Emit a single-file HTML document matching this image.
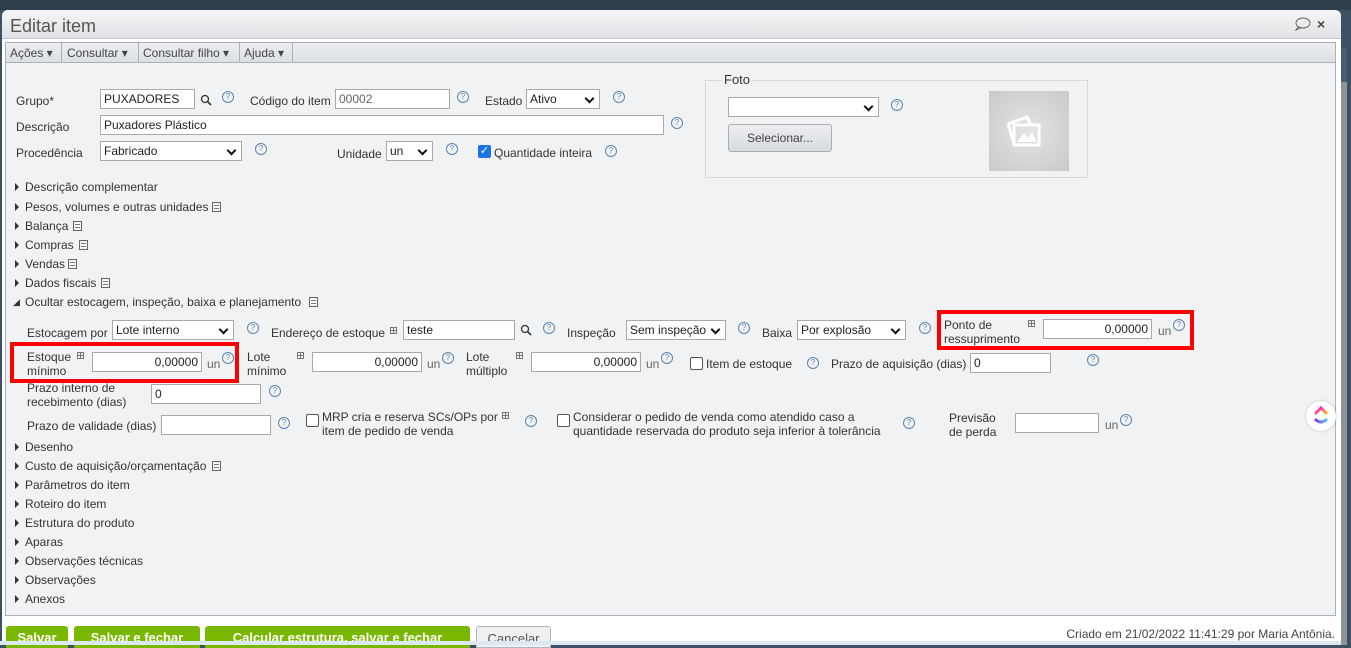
<!DOCTYPE html>
<html><head><meta charset="utf-8">
<style>
*{box-sizing:border-box;margin:0;padding:0}
body{width:1351px;height:645px;overflow:hidden;background:#3d5064;font-family:"Liberation Sans",sans-serif;font-size:12px;color:#333;position:relative}
.a{position:absolute;white-space:nowrap;line-height:14px}
.in{position:absolute;background:#fff;border:1px solid #a9a9a9;height:20px;font-size:12px;line-height:18px;padding:0 3px;color:#222;white-space:nowrap}
.r{text-align:right}
.sel:after{content:"";position:absolute;right:6px;top:5px;width:5px;height:5px;border-right:2px solid #111;border-bottom:2px solid #111;transform:rotate(45deg)}
.q{position:absolute;width:12px;height:12px;border:1px solid #5b85ad;border-radius:50%;font-size:8px;line-height:10px;text-align:center;color:#5b85ad}
.tri{position:absolute;width:0;height:0;border-left:4px solid #333;border-top:4px solid transparent;border-bottom:4px solid transparent}
.doc{position:absolute;width:9px;height:10px;border:1px solid #666;background:repeating-linear-gradient(#fff 0 2px,#777 2px 3px);background-clip:content-box;padding:1px}
.pl{position:absolute;width:7px;height:7px;border:1px solid #777;background:linear-gradient(90deg,transparent 2px,#777 2px 3px,transparent 3px),linear-gradient(transparent 2px,#777 2px 3px,transparent 3px)}
.cb{position:absolute;width:13px;height:13px;border:1px solid #555;border-radius:2px;background:#fff}
.gb{position:absolute;top:626px;height:22px;background:#7ab800;border-radius:3px 3px 0 0;color:#fff;font-weight:bold;font-size:13px;padding:5px 0 0;line-height:14px;text-align:center}
</style></head><body>
<div style="position:absolute;left:0;top:0;width:1351px;height:10px;background:#2f3e4c"></div>
<div style="position:absolute;left:2px;top:10px;width:1339px;height:635px;background:#fff;border-radius:6px 6px 0 0"></div>
<div style="position:absolute;left:2px;top:10px;width:1339px;height:29px;background:linear-gradient(#f4f5f6,#e1e3e6);border-radius:6px 6px 0 0;border-bottom:1px solid #c3c7cc"></div>
<div class="a" style="left:10px;top:16px;font-size:18px;line-height:20px;color:#555">Editar item</div>
<svg style="position:absolute;left:1294px;top:17px" width="18" height="14"><ellipse cx="9" cy="6" rx="7" ry="5" fill="none" stroke="#666"/><path d="M4 10 L2 13 L7 10.5" fill="none" stroke="#666"/></svg>
<div class="a" style="left:1317px;top:17px;font-size:14px;font-weight:bold;color:#444">×</div>
<div style="position:absolute;left:1341px;top:48px;width:6px;height:597px;background:#8e9398"></div>
<div style="position:absolute;left:1341px;top:48px;width:6px;height:34px;background:#4a5e72"></div>
<div style="position:absolute;left:1347px;top:10px;width:4px;height:635px;background:#3d5064"></div>
<div style="position:absolute;left:5px;top:42px;width:1331px;height:21px;background:linear-gradient(#eceef0,#dcdfe3);border:1px solid #aab0b6"></div>
<div class="a" style="left:10px;top:46px;color:#444">Ações ▾</div>
<div style="position:absolute;left:61px;top:43px;width:1px;height:19px;background:#aab0b6"></div>
<div class="a" style="left:67px;top:46px;color:#444">Consultar ▾</div>
<div style="position:absolute;left:138px;top:43px;width:1px;height:19px;background:#aab0b6"></div>
<div class="a" style="left:143px;top:46px;color:#444">Consultar filho ▾</div>
<div style="position:absolute;left:239px;top:43px;width:1px;height:19px;background:#aab0b6"></div>
<div class="a" style="left:244px;top:46px;color:#444">Ajuda ▾</div>
<div style="position:absolute;left:292px;top:43px;width:1px;height:19px;background:#aab0b6"></div>
<div style="position:absolute;left:5px;top:63px;width:1331px;height:553px;background:#f1f2f4;border:1px solid #aab0b6;border-top:none"></div>

<div class="a" style="left:16px;top:94px">Grupo*</div>
<div class="in" style="left:100px;top:89px;width:95px">PUXADORES</div>
<svg style="position:absolute;left:200px;top:94px" width="12" height="12"><circle cx="5" cy="5" r="3.5" fill="none" stroke="#333" stroke-width="1.3"/><path d="M7.5 7.5L11 11" stroke="#333" stroke-width="1.6"/></svg>
<div class="q" style="left:222px;top:91px">?</div>
<div class="a" style="left:250px;top:94px">Código do item</div>
<div class="in" style="left:335px;top:89px;width:115px;color:#666">00002</div>
<div class="q" style="left:457px;top:91px">?</div>
<div class="a" style="left:485px;top:94px">Estado</div>
<div class="in sel" style="left:526px;top:89px;width:74px">Ativo</div>
<div class="q" style="left:613px;top:91px">?</div>

<div class="a" style="left:16px;top:120px">Descrição</div>
<div class="in" style="left:100px;top:115px;width:564px">Puxadores Plástico</div>
<div class="q" style="left:671px;top:117px">?</div>

<div class="a" style="left:16px;top:146px">Procedência</div>
<div class="in sel" style="left:100px;top:141px;width:142px">Fabricado</div>
<div class="q" style="left:255px;top:143px">?</div>
<div class="a" style="left:337px;top:147px">Unidade</div>
<div class="in sel" style="left:386px;top:141px;width:47px">un</div>
<div class="q" style="left:446px;top:143px">?</div>
<div style="position:absolute;left:478px;top:145px;width:13px;height:13px;background:#1a73e8;border-radius:2px;color:#fff;font-size:11px;line-height:13px;text-align:center">✓</div>
<div class="a" style="left:494px;top:146px">Quantidade inteira</div>
<div class="q" style="left:605px;top:145px">?</div>

<div style="position:absolute;left:705px;top:80px;width:383px;height:98px;border:1px solid #d6d9dc"></div>
<div class="a" style="left:722px;top:73px;background:#f1f2f4;padding:0 2px;font-size:13px">Foto</div>
<div class="in sel" style="left:728px;top:97px;width:151px"></div>
<div class="q" style="left:891px;top:99px">?</div>
<div style="position:absolute;left:728px;top:124px;width:104px;height:28px;background:linear-gradient(#eceef0,#d8dbdf);border:1px solid #a9adb2;border-radius:3px;text-align:center;line-height:26px;color:#444">Selecionar...</div>
<div style="position:absolute;left:989px;top:91px;width:80px;height:80px;background:radial-gradient(#e4e4e4,#c9c9c9)"></div>
<svg style="position:absolute;left:1005px;top:111px" width="40" height="40"><path d="M3 13 L22 6 L26 14" fill="none" stroke="#fff" stroke-width="3"/><rect x="9" y="14" width="25" height="20" fill="none" stroke="#fff" stroke-width="3"/><path d="M12 31 L19 22 L23 27 L27 21 L32 31Z" fill="#fff"/><path d="M3 13 L9 32" stroke="#fff" stroke-width="3"/></svg>

<div class="tri" style="left:15px;top:183px"></div><div class="a" style="left:25px;top:180px">Descrição complementar</div>
<div class="tri" style="left:15px;top:203px"></div><div class="a" style="left:25px;top:200px">Pesos, volumes e outras unidades</div><div class="doc" style="left:212px;top:202px"></div>
<div class="tri" style="left:15px;top:222px"></div><div class="a" style="left:25px;top:219px">Balança</div><div class="doc" style="left:73px;top:221px"></div>
<div class="tri" style="left:15px;top:241px"></div><div class="a" style="left:25px;top:238px">Compras</div><div class="doc" style="left:79px;top:240px"></div>
<div class="tri" style="left:15px;top:260px"></div><div class="a" style="left:25px;top:257px">Vendas</div><div class="doc" style="left:68px;top:259px"></div>
<div class="tri" style="left:15px;top:279px"></div><div class="a" style="left:25px;top:276px">Dados fiscais</div><div class="doc" style="left:101px;top:278px"></div>
<div class="a" style="left:13px;top:295px;font-size:9px">◢</div><div class="a" style="left:25px;top:295px">Ocultar estocagem, inspeção, baixa e planejamento</div><div class="doc" style="left:309px;top:297px"></div>

<div class="a" style="left:27px;top:326px">Estocagem por</div>
<div class="in sel" style="left:112px;top:320px;width:122px">Lote interno</div>
<div class="q" style="left:247px;top:322px">?</div>
<div class="a" style="left:271px;top:326px">Endereço de estoque</div><div class="pl" style="left:390px;top:327px"></div>
<div class="in" style="left:403px;top:320px;width:112px">teste</div>
<svg style="position:absolute;left:520px;top:324px" width="12" height="12"><circle cx="5" cy="5" r="3.5" fill="none" stroke="#333" stroke-width="1.3"/><path d="M7.5 7.5L11 11" stroke="#333" stroke-width="1.6"/></svg>
<div class="q" style="left:543px;top:322px">?</div>
<div class="a" style="left:567px;top:326px">Inspeção</div>
<div class="in sel" style="left:626px;top:320px;width:100px">Sem inspeção</div>
<div class="q" style="left:738px;top:322px">?</div>
<div class="a" style="left:762px;top:326px">Baixa</div>
<div class="in sel" style="left:797px;top:320px;width:109px">Por explosão</div>
<div class="q" style="left:919px;top:322px">?</div>
<div style="position:absolute;left:937px;top:310px;width:257px;height:40px;border:4px solid #f00"></div>
<div class="a" style="left:944px;top:318px">Ponto de<br>ressuprimento</div><div class="pl" style="left:1028px;top:320px"></div>
<div class="in r" style="left:1043px;top:319px;width:109px">0,00000</div>
<div class="a" style="left:1158px;top:324px;color:#666">un</div><div class="q" style="left:1173px;top:319px">?</div>

<div style="position:absolute;left:10px;top:342px;width:229px;height:41px;border:4px solid #f00"></div>
<div class="a" style="left:27px;top:350px">Estoque<br>mínimo</div><div class="pl" style="left:77px;top:352px"></div>
<div class="in r" style="left:92px;top:352px;width:110px">0,00000</div>
<div class="a" style="left:207px;top:357px;color:#666">un</div><div class="q" style="left:222px;top:352px">?</div>
<div class="a" style="left:247px;top:350px">Lote<br>mínimo</div><div class="pl" style="left:297px;top:352px"></div>
<div class="in r" style="left:312px;top:352px;width:110px">0,00000</div>
<div class="a" style="left:427px;top:357px;color:#666">un</div><div class="q" style="left:442px;top:352px">?</div>
<div class="a" style="left:466px;top:350px">Lote<br>múltiplo</div><div class="pl" style="left:516px;top:352px"></div>
<div class="in r" style="left:531px;top:352px;width:110px">0,00000</div>
<div class="a" style="left:646px;top:357px;color:#666">un</div><div class="q" style="left:661px;top:352px">?</div>
<div class="cb" style="left:690px;top:357px"></div><div class="a" style="left:706px;top:357px">Item de estoque</div>
<div class="q" style="left:807px;top:357px">?</div>
<div class="a" style="left:831px;top:357px">Prazo de aquisição (dias)</div>
<div class="in" style="left:970px;top:353px;width:81px">0</div>
<div class="q" style="left:1087px;top:354px">?</div>

<div class="a" style="left:27px;top:381px">Prazo interno de<br>recebimento (dias)</div>
<div class="in" style="left:151px;top:384px;width:110px">0</div>
<div class="q" style="left:269px;top:385px">?</div>

<div class="a" style="left:27px;top:419px">Prazo de validade (dias)</div>
<div class="in" style="left:161px;top:415px;width:110px"></div>
<div class="q" style="left:278px;top:417px">?</div>
<div class="cb" style="left:306px;top:414px"></div>
<div class="a" style="left:322px;top:410px">MRP cria e reserva SCs/OPs por<br>item de pedido de venda</div><div class="pl" style="left:502px;top:412px"></div>
<div class="q" style="left:525px;top:415px">?</div>
<div class="cb" style="left:557px;top:414px"></div>
<div class="a" style="left:573px;top:410px">Considerar o pedido de venda como atendido caso a<br>quantidade reservada do produto seja inferior à tolerância</div>
<div class="q" style="left:903px;top:417px">?</div>
<div class="a" style="left:949px;top:411px">Previsão<br>de perda</div>
<div class="in" style="left:1015px;top:413px;width:84px"></div>
<div class="a" style="left:1105px;top:418px;color:#666">un</div><div class="q" style="left:1120px;top:414px">?</div>

<div class="tri" style="left:15px;top:443px"></div><div class="a" style="left:25px;top:440px">Desenho</div>
<div class="tri" style="left:15px;top:462px"></div><div class="a" style="left:25px;top:459px">Custo de aquisição/orçamentação</div><div class="doc" style="left:212px;top:461px"></div>
<div class="tri" style="left:15px;top:481px"></div><div class="a" style="left:25px;top:478px">Parâmetros do item</div>
<div class="tri" style="left:15px;top:500px"></div><div class="a" style="left:25px;top:497px">Roteiro do item</div>
<div class="tri" style="left:15px;top:519px"></div><div class="a" style="left:25px;top:516px">Estrutura do produto</div>
<div class="tri" style="left:15px;top:538px"></div><div class="a" style="left:25px;top:535px">Aparas</div>
<div class="tri" style="left:15px;top:557px"></div><div class="a" style="left:25px;top:554px">Observações técnicas</div>
<div class="tri" style="left:15px;top:576px"></div><div class="a" style="left:25px;top:573px">Observações</div>
<div class="tri" style="left:15px;top:595px"></div><div class="a" style="left:25px;top:592px">Anexos</div>

<div style="position:absolute;left:1306px;top:401px;width:30px;height:30px;border-radius:50%;background:#fff;box-shadow:0 0 3px rgba(0,0,0,.2)"></div>
<svg style="position:absolute;left:1312px;top:404px" width="18" height="22"><defs><linearGradient id="g" x1="0" y1="0" x2="1" y2="1"><stop offset="0" stop-color="#ff02f0"/><stop offset="1" stop-color="#ffc800"/></linearGradient><linearGradient id="h" x1="0" x2="1"><stop offset="0" stop-color="#8930fd"/><stop offset="1" stop-color="#49ccf9"/></linearGradient></defs><path d="M3 10 L9 4 L15 10" fill="none" stroke="url(#g)" stroke-width="3"/><path d="M3 15 Q9 21 15 15" fill="none" stroke="url(#h)" stroke-width="3"/></svg>

<div class="gb" style="left:6px;width:62px">Salvar</div>
<div class="gb" style="left:74px;width:126px">Salvar e fechar</div>
<div class="gb" style="left:205px;width:265px">Calcular estrutura, salvar e fechar</div>
<div style="position:absolute;left:476px;top:626px;height:22px;width:75px;background:#eef0f2;border:1px solid #b3b7bc;border-radius:3px 3px 0 0;color:#555;font-size:13px;padding:5px 0 0;text-align:center;line-height:14px">Cancelar</div>
<div class="a" style="right:16px;top:627px;color:#444">Criado em 21/02/2022 11:41:29 por Maria Antônia.</div>
<div style="position:absolute;left:0;top:641px;width:1341px;height:4px;background:#dde9f2"></div>
</body></html>
